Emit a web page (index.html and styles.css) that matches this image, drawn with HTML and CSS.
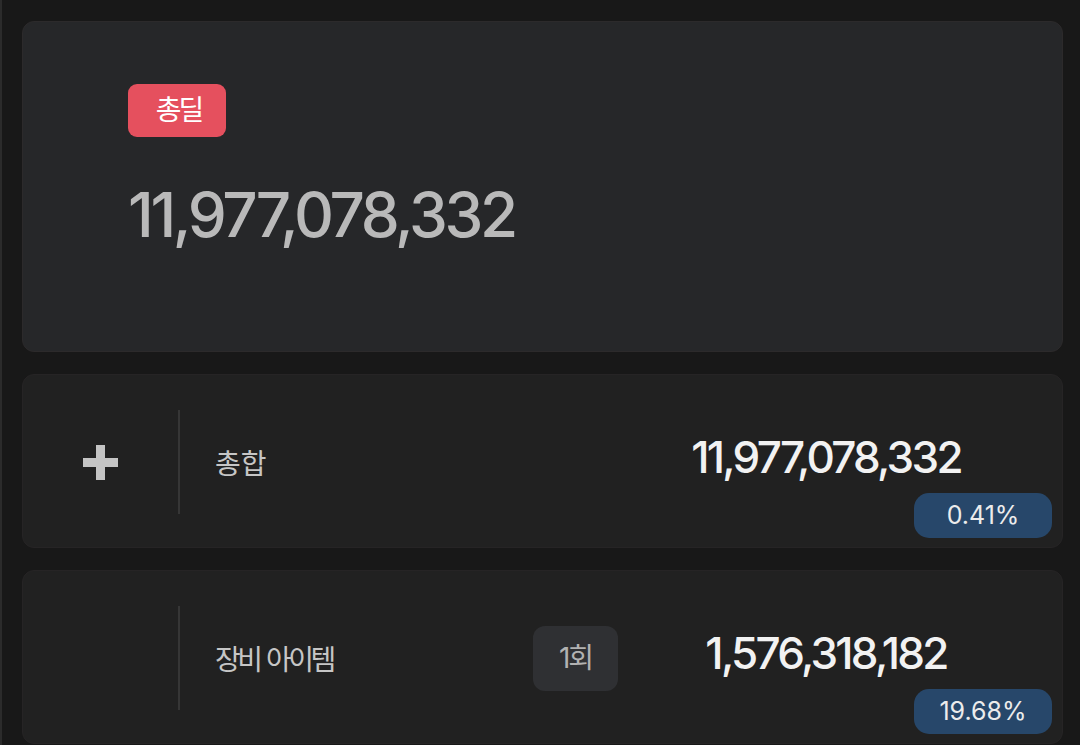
FILE: index.html
```html
<!DOCTYPE html>
<html lang="ko">
<head>
    <meta charset="UTF-8">
    <meta name="viewport" content="width=device-width, initial-scale=1.0">
    <title>총딜</title>
    <link rel="stylesheet" href="styles.css">
</head>
<body>
    <div class="page">
        <section class="total-card">
            <span class="total-badge">총딜</span>
            <div class="total-value">11,977,078,332</div>
        </section>

        <section class="row-card">
            <div class="row-icon">
                <svg width="35" height="35" viewBox="0 0 35 35">
                    <rect x="13" y="0" width="9" height="35" fill="#c4c4c4"/>
                    <rect x="0" y="13" width="35" height="9" fill="#c4c4c4"/>
                </svg>
            </div>
            <div class="row-divider"></div>
            <div class="row-label">
                <span class="label-text spaced">총합</span>
            </div>
            <div class="row-value">
                <div class="value-number">11,977,078,332</div>
                <span class="value-pill">0.41%</span>
            </div>
        </section>

        <section class="row-card">
            <div class="row-icon"></div>
            <div class="row-divider"></div>
            <div class="row-label">
                <span class="label-text">장비 아이템</span>
                <span class="count-pill">1회</span>
            </div>
            <div class="row-value">
                <div class="value-number">1,576,318,182</div>
                <span class="value-pill">19.68%</span>
            </div>
        </section>
    </div>
</body>
</html>
```

FILE: styles.css
```css
body {
    margin: 0;
    padding: 0;
    background-color: #181818;
    border-left: 2px solid #2b2b2b;
    font-family: Inter, "Noto Sans CJK KR", sans-serif;
    height: 745px;
    overflow: hidden;
    box-sizing: border-box;
}

.page {
    display: flex;
    flex-direction: column;
    gap: 22px;
    padding: 21px 17px 0 20px;
}

.total-card {
    height: 331px;
    box-sizing: border-box;
    background-color: #262729;
    border: 1px solid #2c2a2b;
    border-radius: 12px;
    padding: 62px 0 0 105px;
    display: flex;
    flex-direction: column;
    align-items: flex-start;
}

.total-badge {
    background-color: #e5505e;
    color: #fff;
    font-size: 28px;
    letter-spacing: -3px;
    line-height: 53px;
    height: 53px;
    width: 98px;
    box-sizing: border-box;
    padding-left: 3px;
    text-align: center;
    border-radius: 9px;
}

.total-value {
    margin-top: 40px;
    color: #b9b9b9;
    font-size: 62px;
    font-weight: 500;
    line-height: 76px;
    letter-spacing: -3.3px;
}

.row-card {
    height: 174px;
    flex-shrink: 0;
    box-sizing: border-box;
    background-color: #212121;
    border: 1px solid #262425;
    border-radius: 12px;
    padding: 35px 10px 9px 0;
    display: flex;
    align-items: flex-start;
}

.row-icon {
    width: 155px;
    height: 104px;
    display: flex;
    align-items: center;
    justify-content: center;
}

.row-divider {
    width: 2px;
    height: 104px;
    background-color: #363636;
}

.row-label {
    flex: 1;
    height: 104px;
    padding-left: 35px;
    display: flex;
    align-items: center;
    justify-content: space-between;
}

.label-text {
    color: #c6c6c6;
    font-size: 28px;
    letter-spacing: -3.5px;
    word-spacing: 2px;
}

.label-text.spaced {
    letter-spacing: 0;
}

.count-pill {
    background-color: #2f3033;
    color: #b2b2b2;
    font-size: 28px;
    letter-spacing: -2px;
    width: 85px;
    height: 65px;
    line-height: 65px;
    text-align: center;
    border-radius: 12px;
}

.row-value {
    width: 434px;
    display: flex;
    flex-direction: column;
    align-items: flex-end;
}

.value-number {
    align-self: stretch;
    text-align: center;
    padding-right: 18px;
    margin-top: 20px;
    color: #f2f2f2;
    font-size: 44px;
    font-weight: 500;
    line-height: 54px;
    letter-spacing: -2.7px;
}

.value-pill {
    margin-top: 9px;
    width: 138px;
    height: 45px;
    line-height: 45px;
    text-align: center;
    background-color: #27476a;
    color: #ececec;
    font-size: 25px;
    border-radius: 15px;
}
```
